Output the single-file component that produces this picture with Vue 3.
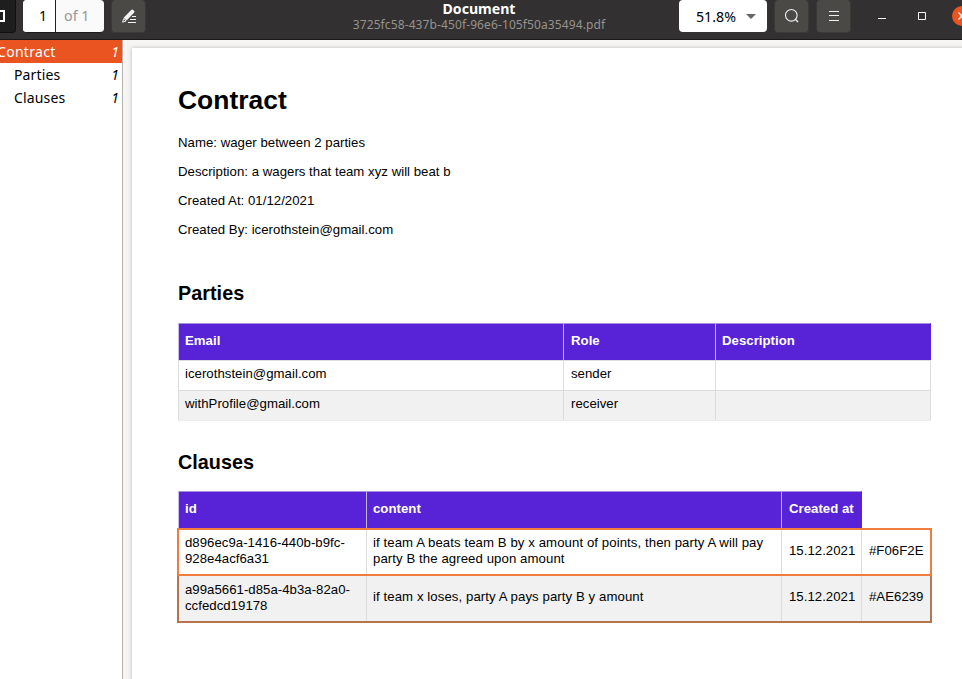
<script setup>
const outline = [
  { title: 'Contract', page: 1, level: 0, active: true },
  { title: 'Parties', page: 1, level: 1 },
  { title: 'Clauses', page: 1, level: 1 }
]
const details = [
  'Name: wager between 2 parties',
  'Description: a wagers that team xyz will beat b',
  'Created At: 01/12/2021',
  'Created By: icerothstein@gmail.com'
]
const parties = [
  { email: 'icerothstein@gmail.com', role: 'sender' },
  { email: 'withProfile@gmail.com', role: 'receiver' }
]
const clauses = [
  {
    id: ['d896ec9a-1416-440b-b9fc-', '928e4acf6a31'],
    content: ['if team A beats team B by x amount of points, then party A will pay', 'party B the agreed upon amount'],
    date: '15.12.2021', color: '#F06F2E', tone: 'bright'
  },
  {
    id: ['a99a5661-d85a-4b3a-82a0-', 'ccfedcd19178'],
    content: ['if team x loses, party A pays party B y amount'],
    date: '15.12.2021', color: '#AE6239', tone: 'dark'
  }
]
</script>

<template>
  <div class="window">
    <header class="bar">
      <div class="side-toggle">
        <svg width="5" height="12" viewBox="0 0 5 12"><path d="M0 1H4V11H0" fill="none" stroke="#fff" stroke-width="2" /></svg>
      </div>
      <div class="pager"><span class="current">1</span><span class="total">of 1</span></div>
      <button class="tool annotate">
        <svg width="16" height="16" viewBox="0 0 16 16">
          <path d="M1.6 14.2 2.6 10.8 5 13z" fill="none" stroke="#eee" stroke-width="1" />
          <path d="M2.6 9.8 10.2 2 Q11.3 1 12.3 2 L13 2.7 Q14 3.8 13 4.8L5.6 12.4z" fill="#f2f2f2" />
          <path d="M11 8.5h4M9 11.5h6M7 14.5h8" stroke="#f2f2f2" stroke-width="1.2" />
        </svg>
      </button>
      <div class="heading"><strong>Document</strong><small>3725fc58-437b-450f-96e6-105f50a35494.pdf</small></div>
      <div class="zoom"><span>51.8%</span><i class="caret"></i></div>
      <button class="tool search">
        <svg width="16" height="16" viewBox="0 0 16 16"><circle cx="7.3" cy="7.3" r="5.8" fill="none" stroke="#eee" stroke-width="1.1" /><path d="M11.3 11.3 14 14" stroke="#eee" stroke-width="1.5" /></svg>
      </button>
      <button class="tool menu">
        <svg width="12" height="12" viewBox="0 0 12 12"><path d="M1 1.5h10M1 5.5h10M1 10.5h10" stroke="#eee" stroke-width="1" /></svg>
      </button>
      <svg class="minimize" width="8" height="10" viewBox="0 0 8 10"><path d="M0 9.5h8" stroke="#fff" /></svg>
      <svg class="maximize" width="8" height="8" viewBox="0 0 8 8"><path d="M.5.5h7v7h-7z" fill="none" stroke="#fff" /></svg>
      <svg class="close" width="20" height="20" viewBox="0 0 20 20"><circle cx="10" cy="10" r="10" fill="#e95420" /><path d="M6.5 6.5l7 7M13.5 6.5l-7 7" stroke="#fff" stroke-width="1.3" /></svg>
    </header>

    <div class="body">
      <nav class="outline">
        <div v-for="item in outline" :key="item.title" class="entry" :class="{ active: item.active, nested: item.level }">
          <span>{{ item.title }}</span><em>{{ item.page }}</em>
        </div>
      </nav>
      <main class="canvas">
        <article class="page">
          <h1>Contract</h1>
          <p v-for="line in details" :key="line">{{ line }}</p>

          <h2 class="parties-title">Parties</h2>
          <div class="table">
            <div class="row parties head"><div>Email</div><div>Role</div><div>Description</div></div>
            <div v-for="(p, i) in parties" :key="p.email" class="row parties" :class="{ even: i % 2 }">
              <div>{{ p.email }}</div><div>{{ p.role }}</div><div></div>
            </div>
          </div>

          <h2 class="clauses-title">Clauses</h2>
          <div class="table clause-table">
            <div class="row clauses head"><div>id</div><div class="text">content</div><div>Created at</div></div>
            <div v-for="(c, i) in clauses" :key="c.color" class="row clauses record" :class="[c.tone, { even: i % 2 }]">
              <div><span v-for="t in c.id" :key="t">{{ t }}</span></div>
              <div class="text"><span v-for="t in c.content" :key="t">{{ t }}</span></div>
              <div>{{ c.date }}</div>
              <div>{{ c.color }}</div>
            </div>
          </div>
        </article>
      </main>
    </div>
  </div>
</template>

<style>
body { margin: 0; overflow: hidden; }
</style>

<style scoped>
* { box-sizing: border-box; }
.window { width: 962px; height: 679px; overflow: hidden; display: flex; flex-direction: column; background: #f6f5f4; font-family: "Noto Sans", "Open Sans", sans-serif; }
.bar { flex: none; height: 40px; display: flex; align-items: flex-start; background: #323030; border-bottom: 1px solid #191919; overflow: hidden; white-space: nowrap; }
.bar > * { flex: none; }
.side-toggle { width: 16px; height: 33px; padding-top: 10px; background: #1f1e1e; border: 1px solid #111; border-width: 0 1px 1px 0; border-radius: 0 0 4px 0; }
.side-toggle svg { display: block; }
.pager { display: flex; width: 81px; height: 33px; margin-left: 7px; border-bottom: 1px solid #1b1b1b; border-radius: 4px; overflow: hidden; font-size: 14px; line-height: 32px; background: #fafafa; }
.current { width: 33px; padding-left: 16px; background: #fff; border-right: 1px solid #222; color: #000; }
.total { padding-left: 8px; color: #979797; font-size: 14.3px; }
.tool { width: 35px; height: 33px; padding: 0; display: flex; align-items: center; justify-content: center; background: #4a4946; border: 1px solid #3b3938; border-top: 0; border-radius: 4px; }
.annotate { margin-left: 7px; }
.heading { width: 300px; margin-left: 183px; display: flex; flex-direction: column; align-items: center; }
.heading strong { font-size: 14.1px; line-height: 18px; color: #fff; }
.heading small { font-size: 12px; letter-spacing: .11px; line-height: 14px; color: #96938e; }
.zoom { width: 88px; height: 32px; margin-left: 50px; display: flex; align-items: center; background: #fff; border-radius: 4px; padding-left: 17px; font-size: 14.2px; }
.caret { margin-left: 10px; border: 5px solid transparent; border-top-color: #666; border-bottom: 0; }
.search { margin-left: 7px; }
.menu { margin-left: 7px; }
.minimize { margin: 9px 0 0 27px; }
.maximize { margin: 12px 0 0 32px; }
.close { margin: 6px 0 0 26px; }

.body { flex: 1; min-height: 0; display: flex; }
.outline { flex: none; width: 123px; background: #fff; border-right: 1px solid #b6b3b1; }
.entry { display: flex; justify-content: space-between; height: 23px; line-height: 23px; padding: 0 3px 0 0; font-size: 14px; letter-spacing: .15px; color: #000; }
.entry.nested { padding-left: 14px; }
.entry.active { background: #e95420; color: #fff; }
.entry.active span { margin-left: -3px; letter-spacing: .3px; }
.canvas { flex: 1; padding: 8px 0 0 9px; background: #f6f5f4; overflow: hidden; }
.page { width: 845px; height: 700px; padding: 35px 0 0 46px; background: #fff; box-shadow: 0 0 4px rgba(0, 0, 0, .25); font: 13.2px/16px "Liberation Sans", Arial, sans-serif; letter-spacing: .03px; color: #000; }
h1 { margin: 0 0 18px; font-size: 26.4px; line-height: 34px; }
p { margin: 0 0 13px; }
h2 { margin: 0; font-size: 19.8px; line-height: 24px; }
.parties-title { margin-top: 43px; }
.clauses-title { margin-top: 29px; }
.table { width: 753px; margin-top: 18px; }
.clause-table { margin-top: 17px; }
.row { display: grid; }
.parties { grid-template-columns: 385px 152px 215px; height: 30px; border-left: 1px solid #ddd; }
.clauses { grid-template-columns: 188px 415px 80px 69px; }
.row > div { padding-left: 7px; border-right: 1px solid #ddd; display: flex; flex-direction: column; justify-content: center; white-space: nowrap; }
.parties > div { border-top: 1px solid #ddd; padding-bottom: 4px; }
.parties > div:last-child { padding-left: 6px; }
.parties:last-child { height: 31px; border-bottom: 1px solid #ececec; }
.row > div:first-child { padding-left: 6px; }
.row > .text { padding-left: 6px; }
.row.head { height: 37px; border-left: 1px solid #cbbdf0; }
.row.head > div { color: #fff; font-weight: 700; background: #5822d7; border-top: 1px solid #a590df; border-right-color: #c3b2ee; padding-bottom: 3px; }
.row.head > div:last-child { border-right-color: #5822d7; }
.even { background: #f1f1f1; }
.record { width: 755px; margin: 0 0 0 -1px; border: 2px solid #f27b3f; height: 48px; grid-template-columns: 188px 415px 80px 68px; }
.record > div { padding-bottom: 2px; }
.record > div:last-child { border-right: 0; }
.record.dark { height: 47px; border-color: #b8744f; border-top: 0; }
.record.dark > div { padding-bottom: 3px; }
.record.dark > div:first-child { padding-bottom: 1px; }
.record .text { letter-spacing: .08px; }
.record span { display: block; }
</style>
